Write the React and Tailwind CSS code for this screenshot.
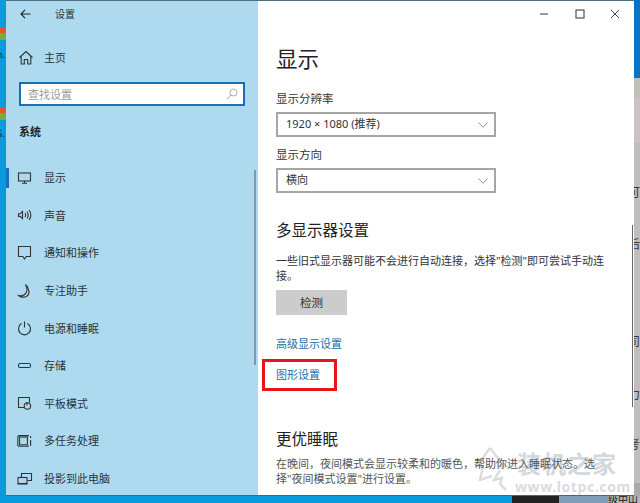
import React from "react";

const S = { fill: "none", stroke: "#333", strokeWidth: 1.1 };

const Icon = ({ children }) => (
  <svg width="16" height="16" viewBox="0 0 16 16" className="shrink-0">
    <g {...S}>{children}</g>
  </svg>
);

const icons = {
  display: (
    <>
      <rect x="1.5" y="3" width="12" height="8" />
      <path d="M7.5 11v2M5 13.2h5" />
    </>
  ),
  sound: (
    <>
      <path d="M5.5 4.5 3 6.8H1.5v2.6H3l2.5 2.2z" />
      <path d="M8 6c.8 1.2.8 2.8 0 4M10 4.5c1.4 2 1.4 5 0 7M12.2 3c2 3 2 7 0 10" />
    </>
  ),
  notify: <path d="M1.5 1.5h12v10H9.2L7.5 14l-1.7-2.5H1.5z" />,
  moon: <path d="M8.5 1.5c1.6 3 2 6 .6 8.4-1.4 2.2-4.4 3.2-7.4 2.6 1.6 1.7 5.2 2.2 7.8 1 3.4-1.9 3.6-7.8-1-12z" />,
  power: (
    <>
      <path d="M7.5 1.5v6" />
      <path d="M4.6 3.6a6 6 0 1 0 5.8 0" />
    </>
  ),
  storage: <rect x="1.5" y="5.5" width="12" height="4" rx="1.6" />,
  tablet: (
    <>
      <path d="M7 12.5H1.5v-10h11v5" />
      <circle cx="10.4" cy="11" r="3.2" />
      <path d="M10 7v3.5" />
    </>
  ),
  multi: (
    <>
      <rect x="2.6" y="4" width="7.8" height="7.8" />
      <path d="M1 2.6h11M1 13.2h11M.8 3v10M13.6 3v2M13.6 7v6" />
    </>
  ),
  project: (
    <>
      <path d="M4.5 6V2.5h10v7h-4" />
      <rect x="1" y="6.5" width="9" height="6" />
      <path d="M0.5 13h10" />
    </>
  ),
};

const nav = [
  ["显示", "display"],
  ["声音", "sound"],
  ["通知和操作", "notify"],
  ["专注助手", "moon"],
  ["电源和睡眠", "power"],
  ["存储", "storage"],
  ["平板模式", "tablet"],
  ["多任务处理", "multi"],
  ["投影到此电脑", "project"],
];

const Chevron = () => (
  <svg width="10" height="6" viewBox="0 0 10 6">
    <path d="M.5.5 5 5.2 9.5.5" fill="none" stroke="#888" strokeWidth="0.9" />
  </svg>
);

const Select = ({ children, className }) => (
  <div className={`flex h-[25px] w-[220px] items-center justify-between border-2 border-[#a6a6a6] bg-white pl-[8px] pr-[6px] text-[11px] text-[#333] ${className}`}>
    <span>{children}</span>
    <Chevron />
  </div>
);

const Frag = ({ children, className = "" }) => (
  <div className={`h-[16px] shrink-0 overflow-hidden text-[12px] leading-[16px] text-[#333] ${className}`}>
    <span className="-ml-[6px] block w-[12px]">{children}</span>
  </div>
);

export default function App() {
  return (
    <div className="flex h-[503px] w-[640px] flex-col overflow-hidden bg-[#0a9ade] font-['Noto_Sans','Noto_Sans_CJK_SC',sans-serif]" lang="zh-CN">
      <div className="flex h-[496px]">
        {/* desktop strip, left */}
        <div className="flex w-[6px] shrink-0 flex-col overflow-hidden bg-[#0a9ade]">
          <div className="mt-[27px] h-[6px] bg-[#e0572d]" />
          <div className="h-[7px] bg-[#6ab23c]" />
          <div className="mt-[9px] h-[12px] overflow-hidden text-[9px] leading-[12px] text-[#111]">
            <span className="-ml-[3px] block">n.</span>
          </div>
          <div className="mt-[46px] h-[6px] bg-[#e0572d]" />
          <div className="h-[7px] bg-[#6ab23c]" />
          <div className="mt-[8px] h-[12px] overflow-hidden text-[9px] leading-[12px] text-[#111]">
            <span className="-ml-[3px] block">5.</span>
          </div>
        </div>

        {/* settings window */}
        <div className="flex min-w-0 flex-1 border-y border-y-[#4f6f7f] border-b-[#3d6a80]">
          {/* sidebar */}
          <div className="relative w-[252px] shrink-0 bg-[#aedaef] text-[#2a3338]">
            <div className="flex h-[26px] items-center pl-[14px]">
              <svg width="11" height="10" viewBox="0 0 11 10">
                <path d="M5 .8 1 5l4 4.2M1 5h9.5" fill="none" stroke="#222" strokeWidth="1.1" />
              </svg>
              <span className="ml-[24px] text-[10px] leading-none">设置</span>
            </div>
            <div className="mt-[23px] flex h-[16px] items-center pl-[12px]">
              <svg width="16" height="16" viewBox="0 0 16 16">
                <path d="M1.5 7.5 8 1.5l6.5 6M3.2 6.5v7.5H6.3V9.5h3.4V14h3.1V6.5" fill="none" stroke="#333" strokeWidth="1.1" />
              </svg>
              <span className="ml-[10px] text-[11px]">主页</span>
            </div>
            <div className="ml-[13px] mt-[16px] flex h-[24px] w-[226px] items-center justify-between border-2 border-[#1c6fb7] bg-white pl-[7px] pr-[5px]">
              <span className="text-[11px] leading-none text-[#9a9a9a]">查找设置</span>
              <svg width="12" height="12" viewBox="0 0 12 12">
                <circle cx="7.5" cy="4.5" r="3.5" fill="none" stroke="#aaa" />
                <path d="M5 7 1 11" stroke="#aaa" />
              </svg>
            </div>
            <div className="ml-[13px] mt-[18px] h-[16px] text-[11px] font-bold leading-[16px] text-[#222]">系统</div>
            <div className="mt-[19px] flex flex-col">
              {nav.map(([label, icon], i) => (
                <div key={label} className="relative flex h-[37.6px] items-center pl-[11px]">
                  {i === 0 && <div className="absolute left-0 top-[9px] h-[20px] w-[3px] bg-[#1a6fc0]" />}
                  <Icon>{icons[icon]}</Icon>
                  <span className="ml-[11px] text-[11px] leading-none">{label}</span>
                </div>
              ))}
            </div>
            <div className="absolute right-[2px] top-[169px] h-[195px] w-[2px] bg-[#7f99a6]" />
          </div>

          {/* content pane */}
          <div className="relative min-w-0 flex-1 bg-white pl-[18px] text-[#333]">
            {/* watermark */}
            <svg className="absolute left-[216px] top-[443px]" width="38" height="52" viewBox="0 0 38 52">
              <path d="M16 4 3 22h6l-3 14 12-4M16 4l14 18h-7M26 26l-6 10 8-2-2 6 6 6" fill="none" stroke="#dcdcdc" strokeWidth="2.4" />
            </svg>
            <div className="absolute left-[259px] top-[448px] text-[24px] font-bold leading-[30px] tracking-[1px] text-[#d3d7de]">装机之家</div>
            <div className="absolute left-[257px] top-[477px] text-[14px] font-bold leading-[18px] tracking-[0.6px] text-[#d8dbe0]">www.lotpc.com</div>

            <div className="-ml-[18px] flex h-[26px] items-center">
              <svg className="ml-[281px]" width="10" height="10" viewBox="0 0 10 10">
                <path d="M1 5h8" stroke="#444" strokeWidth="1.1" />
              </svg>
              <svg className="ml-[26px]" width="10" height="10" viewBox="0 0 10 10">
                <rect x="1" y="1" width="8" height="8" fill="none" stroke="#444" strokeWidth="1.1" />
              </svg>
              <svg className="ml-[25px]" width="10" height="10" viewBox="0 0 10 10">
                <path d="M1 1l8 8M9 1 1 9" stroke="#444" strokeWidth="1" />
              </svg>
            </div>
            <h1 className="mt-[16px] text-[21.5px] font-normal leading-[32px] text-[#222]">显示</h1>
            <div className="mt-[16px] text-[11.5px] leading-[16px]">显示分辨率</div>
            <Select className="mt-[5px]">1920 × 1080 (推荐)</Select>
            <div className="mt-[10px] text-[11.5px] leading-[16px]">显示方向</div>
            <Select className="mt-[5px]">横向</Select>
            <h2 className="mt-[26px] text-[15.5px] font-normal leading-[22px] text-[#222]">多显示器设置</h2>
            <p className="mt-[12px] whitespace-nowrap text-[11px] leading-[15px]">
              一些旧式显示器可能不会进行自动连接，选择"检测"即可尝试手动连
              <br />
              接。
            </p>
            <div className="mt-[7px] flex h-[25px] w-[71px] items-center justify-center bg-[#cccccc] text-[11.5px] leading-none">检测</div>
            <div className="mt-[21px] text-[11px] leading-[16px] text-[#1a6ea8]">高级显示设置</div>
            <div className="relative mt-[15px] text-[11px] leading-[16px] text-[#1a6ea8]">
              图形设置
              <div className="absolute -left-[14px] -top-[8px] h-[32px] w-[75px] border-[3px] border-[#e8141c]" />
            </div>
            <h2 className="mt-[45px] text-[15.5px] font-normal leading-[22px] text-[#222]">更优睡眠</h2>
            <p className="relative z-10 mt-[6px] whitespace-nowrap text-[11px] leading-[15px] text-[#555]">
              在晚间，夜间模式会显示较柔和的暖色，帮助你进入睡眠状态。选
              <br />
              择"夜间模式设置"进行设置。
            </p>

            {/* scrollbar */}
            <div className="absolute right-[1px] top-[224px] h-[182px] w-[1.5px] bg-[#666]" />
          </div>
        </div>

        {/* desktop strip, right */}
        <div className="flex w-[6px] shrink-0 flex-col overflow-hidden bg-[#c2bdbd]">
          <div className="h-[78px] shrink-0 bg-[#0a72c4]" />
          <div className="h-[20px] shrink-0 bg-[#bcc2b8]" />
          <div className="h-[45px] shrink-0 bg-[#cbc3c3]" />
          <div className="h-[42px] shrink-0" />
          <Frag>可</Frag>
          <div className="h-[36px] shrink-0" />
          <Frag>后</Frag>
          <div className="h-[81px] shrink-0" />
          <Frag>司</Frag>
          <div className="h-[37px] shrink-0" />
          <Frag>力</Frag>
          <div className="h-[34px] shrink-0" />
          <Frag>考</Frag>
          <div className="h-[30px] shrink-0" />
          <div className="h-[13px] shrink-0 bg-[#aaaaaa]" />
        </div>
      </div>

      {/* desktop strip, bottom */}
      <div className="flex h-[7px] shrink-0">
        <div className="w-[512px] bg-[#0a9ade]" />
        <div className="w-[47px] bg-[#222222]" />
        <div className="w-[49px] bg-[#7f9cb8]" />
        <div className="flex-1 overflow-hidden bg-[#b5b5b5] text-[10px] leading-[7px] text-[#222]">级中山</div>
      </div>
    </div>
  );
}
